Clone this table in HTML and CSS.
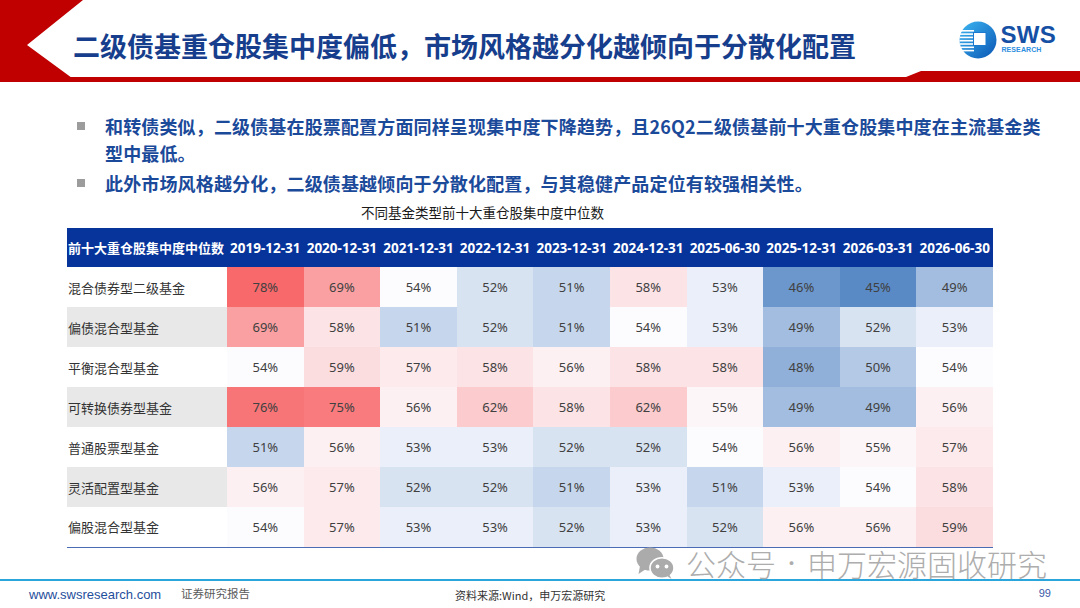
FILE: index.html
```html
<!DOCTYPE html>
<html lang="zh-CN">
<head>
<meta charset="utf-8">
<title>二级债基重仓股集中度偏低</title>
<link rel="stylesheet" href="styles.css">
</head>
<body>
<div class="page">
  <header class="header">
    <svg class="header-deco" viewBox="0 0 1080 82" width="1080" height="82">
      <polygon points="0,0 83,0 27,45 72,78 0,78" fill="#c00000"/>
      <rect x="0" y="77" width="910" height="5" fill="#c00000"/>
      <polygon points="906,77 921,71 1080,71 1080,82 906,82" fill="#c00000"/>
    </svg>
    <h1 class="title">二级债基重仓股集中度偏低，市场风格越分化越倾向于分散化配置</h1>
    <div class="logo">
      <svg class="logo-mark" viewBox="0 0 38 38" width="38" height="38">
        <defs>
          <linearGradient id="lg" x1="0" y1="0" x2="1" y2="1">
            <stop offset="0" stop-color="#3db6f2"/>
            <stop offset="1" stop-color="#0a56b4"/>
          </linearGradient>
        </defs>
        <circle cx="19" cy="19" r="18.5" fill="url(#lg)"/>
        <g fill="#ffffff">
          <rect x="2" y="9" width="13" height="1.6"/>
          <rect x="1" y="12.3" width="14" height="1.6"/>
          <rect x="0.6" y="15.6" width="14.4" height="1.6"/>
          <rect x="0.5" y="18.9" width="14.5" height="1.6"/>
          <rect x="0.8" y="22.2" width="14.2" height="1.6"/>
          <rect x="1.5" y="25.5" width="13.5" height="1.6"/>
          <rect x="3" y="28.8" width="12" height="1.6"/>
        </g>
        <rect x="14.5" y="11.5" width="12.5" height="13" fill="#ffffff" stroke="#1b79cf" stroke-width="1"/>
      </svg>
      <div class="logo-text">
        <span class="logo-sws">SWS</span>
        <span class="logo-research">RESEARCH</span>
      </div>
    </div>
  </header>

  <section class="bullets">
    <div class="bullet">
      <span class="bullet-mark"></span>
      <p class="bullet-text">和转债类似，二级债基在股票配置方面同样呈现集中度下降趋势，且26Q2二级债基前十大重仓股集中度在主流基金类型中最低。</p>
    </div>
    <div class="bullet">
      <span class="bullet-mark"></span>
      <p class="bullet-text">此外市场风格越分化，二级债基越倾向于分散化配置，与其稳健产品定位有较强相关性。</p>
    </div>
  </section>

  <div class="caption">不同基金类型前十大重仓股集中度中位数</div>

  <table class="heat">
    <colgroup>
      <col class="c-label">
      <col class="c-val"><col class="c-val"><col class="c-val"><col class="c-val"><col class="c-val">
      <col class="c-val"><col class="c-val"><col class="c-val"><col class="c-val"><col class="c-val">
    </colgroup>
    <thead>
      <tr>
        <th class="th-label">前十大重仓股集中度中位数</th>
        <th>2019-12-31</th><th>2020-12-31</th><th>2021-12-31</th><th>2022-12-31</th><th>2023-12-31</th>
        <th>2024-12-31</th><th>2025-06-30</th><th>2025-12-31</th><th>2026-03-31</th><th>2026-06-30</th>
      </tr>
    </thead>
    <tbody>
      <tr>
        <td class="label">混合债券型二级基金</td>
        <td style="background:#f8696b">78%</td><td style="background:#faa0a2">69%</td><td style="background:#fcfcff">54%</td><td style="background:#d8e3f2">52%</td><td style="background:#c6d6ec">51%</td>
        <td style="background:#fbe3e6">58%</td><td style="background:#eaeff9">53%</td><td style="background:#6c97cc">46%</td><td style="background:#5a8ac6">45%</td><td style="background:#a2bddf">49%</td>
      </tr>
      <tr class="alt">
        <td class="label">偏债混合型基金</td>
        <td style="background:#faa0a2">69%</td><td style="background:#fbe3e6">58%</td><td style="background:#c6d6ec">51%</td><td style="background:#d8e3f2">52%</td><td style="background:#c6d6ec">51%</td>
        <td style="background:#fcfcff">54%</td><td style="background:#eaeff9">53%</td><td style="background:#a2bddf">49%</td><td style="background:#d8e3f2">52%</td><td style="background:#eaeff9">53%</td>
      </tr>
      <tr>
        <td class="label">平衡混合型基金</td>
        <td style="background:#fcfcff">54%</td><td style="background:#fbdde0">59%</td><td style="background:#fceaec">57%</td><td style="background:#fbe3e6">58%</td><td style="background:#fcf0f3">56%</td>
        <td style="background:#fbe3e6">58%</td><td style="background:#fbe3e6">58%</td><td style="background:#90b0d9">48%</td><td style="background:#b4c9e6">50%</td><td style="background:#fcfcff">54%</td>
      </tr>
      <tr class="alt">
        <td class="label">可转换债券型基金</td>
        <td style="background:#f87577">76%</td><td style="background:#f97b7d">75%</td><td style="background:#fcf0f3">56%</td><td style="background:#fbcbce">62%</td><td style="background:#fbe3e6">58%</td>
        <td style="background:#fbcbce">62%</td><td style="background:#fcf6f9">55%</td><td style="background:#a2bddf">49%</td><td style="background:#a2bddf">49%</td><td style="background:#fcf0f3">56%</td>
      </tr>
      <tr>
        <td class="label">普通股票型基金</td>
        <td style="background:#c6d6ec">51%</td><td style="background:#fcf0f3">56%</td><td style="background:#eaeff9">53%</td><td style="background:#eaeff9">53%</td><td style="background:#d8e3f2">52%</td>
        <td style="background:#d8e3f2">52%</td><td style="background:#fcfcff">54%</td><td style="background:#fcf0f3">56%</td><td style="background:#fcf6f9">55%</td><td style="background:#fceaec">57%</td>
      </tr>
      <tr class="alt">
        <td class="label">灵活配置型基金</td>
        <td style="background:#fcf0f3">56%</td><td style="background:#fceaec">57%</td><td style="background:#d8e3f2">52%</td><td style="background:#d8e3f2">52%</td><td style="background:#c6d6ec">51%</td>
        <td style="background:#eaeff9">53%</td><td style="background:#c6d6ec">51%</td><td style="background:#eaeff9">53%</td><td style="background:#fcfcff">54%</td><td style="background:#fbe3e6">58%</td>
      </tr>
      <tr class="last">
        <td class="label">偏股混合型基金</td>
        <td style="background:#fcfcff">54%</td><td style="background:#fceaec">57%</td><td style="background:#eaeff9">53%</td><td style="background:#eaeff9">53%</td><td style="background:#d8e3f2">52%</td>
        <td style="background:#eaeff9">53%</td><td style="background:#d8e3f2">52%</td><td style="background:#fcf0f3">56%</td><td style="background:#fcf0f3">56%</td><td style="background:#fbdde0">59%</td>
      </tr>
    </tbody>
  </table>

  <footer class="footer">
    <span class="f-url">www.swsresearch.com</span>
    <span class="f-type">证券研究报告</span>
    <span class="f-source">资料来源:Wind，申万宏源研究</span>
    <span class="f-page">99</span>
  </footer>

  <div class="watermark">
    <svg class="wm-icon" viewBox="0 0 38 32" width="38" height="32">
      <ellipse cx="14" cy="12" rx="13.5" ry="11.5" fill="#ababab"/>
      <polygon points="4,19 2.5,27 10,22" fill="#ababab"/>
      <ellipse cx="26" cy="21" rx="12" ry="10.3" fill="#ababab" stroke="#ffffff" stroke-width="1.6"/>
      <polygon points="31,29 35.5,32 33,27" fill="#ababab"/>
      <circle cx="21.5" cy="19.5" r="1.9" fill="#ffffff"/>
      <circle cx="30.5" cy="19.5" r="1.9" fill="#ffffff"/>
    </svg>
    <span class="wm-text">公众号<span class="wm-dot">·</span>申万宏源固收研究</span>
  </div>
</div>
</body>
</html>
```

FILE: styles.css
```css
* { box-sizing: border-box; }

html, body {
  margin: 0;
  padding: 0;
}

body {
  width: 1080px;
  height: 608px;
  overflow: hidden;
  background: #ffffff;
  font-family: "Noto Sans", "Noto Sans CJK SC", sans-serif;
}

.page {
  position: relative;
  width: 1080px;
  height: 608px;
  display: flex;
  flex-direction: column;
}

/* ---------- header ---------- */
.header {
  position: relative;
  height: 82px;
  flex: none;
  display: flex;
  align-items: flex-start;
  justify-content: space-between;
}

.header-deco {
  position: absolute;
  left: 0;
  top: 0;
}

.title {
  position: relative;
  margin: 0;
  padding: 28px 0 0 73px;
  font-family: "Noto Sans CJK SC", sans-serif;
  font-size: 27px;
  line-height: 36px;
  font-weight: 700;
  color: #163e8c;
  white-space: nowrap;
}

.logo {
  position: relative;
  display: flex;
  align-items: center;
  gap: 3px;
  padding-top: 21px;
  margin-right: 24px;
}

.logo-mark {
  display: block;
}

.logo-text {
  display: flex;
  flex-direction: column;
  margin-top: -2px;
}

.logo-sws {
  font-family: "Liberation Sans", Arial, sans-serif;
  font-weight: 700;
  font-size: 24px;
  line-height: 22px;
  color: #1550a5;
  letter-spacing: 0.3px;
}

.logo-research {
  font-family: "Liberation Sans", Arial, sans-serif;
  font-weight: 700;
  font-size: 7px;
  line-height: 8px;
  color: #2b8ee0;
  margin-left: 1px;
  letter-spacing: 0.1px;
}

/* ---------- bullets ---------- */
.bullets {
  flex: none;
  margin-top: 31px;
  padding-left: 77px;
  display: flex;
  flex-direction: column;
  gap: 3px;
}

.bullet {
  display: flex;
  align-items: flex-start;
  gap: 20px;
}

.bullet-mark {
  flex: none;
  width: 8px;
  height: 8px;
  margin-top: 9px;
  background: #9c9c9c;
}

.bullet-text {
  margin: 0;
  width: 940px;
  font-family: "Noto Sans CJK SC", sans-serif;
  font-size: 18px;
  line-height: 27px;
  font-weight: 700;
  color: #1b4a9a;
  letter-spacing: 0.15px;
}

/* ---------- caption ---------- */
.caption {
  flex: none;
  margin-top: 6px;
  padding-left: 361px;
  font-family: "Noto Sans CJK SC", sans-serif;
  font-size: 13.5px;
  line-height: 18px;
  color: #1a1a1a;
}

/* ---------- table ---------- */
.heat {
  flex: none;
  margin: 7px 0 0 67px;
  width: 926px;
  table-layout: fixed;
  border-collapse: collapse;
  border-spacing: 0;
}

.c-label { width: 160px; }
.c-val { width: 76.6px; }

.heat thead tr {
  height: 39px;
  background: #06349b;
}

.heat th {
  padding: 0;
  color: #ffffff;
  font-family: "Noto Sans", "Noto Sans CJK SC", sans-serif;
  font-weight: 700;
  font-size: 13.5px;
  text-align: center;
  white-space: nowrap;
}

.heat th.th-label {
  text-align: left;
  padding-left: 1px;
  font-family: "Noto Sans CJK SC", sans-serif;
  font-size: 13px;
}

.heat tbody tr {
  height: 40px;
}

.heat td {
  padding: 0;
  text-align: center;
  font-family: "Noto Sans", "Noto Sans CJK SC", sans-serif;
  font-size: 13px;
  color: #404040;
}

.heat td.label {
  text-align: left;
  padding-left: 1px;
  font-family: "Noto Sans CJK SC", sans-serif;
  color: #333333;
  background: #ffffff;
}

.heat tr.alt td.label {
  background: #e8e8e8;
}

.heat tr.last td {
  border-bottom: 1.5px solid #4a6cb5;
}

/* ---------- footer ---------- */
.footer {
  margin-top: auto;
  flex: none;
  height: 29px;
  border-top: 2px solid #2ba6dc;
  display: flex;
  align-items: center;
}

.f-url {
  flex: none;
  width: 181px;
  padding-left: 29px;
  font-family: "Liberation Sans", Arial, sans-serif;
  font-size: 13px;
  color: #1f4e9c;
  white-space: nowrap;
}

.f-type {
  flex: none;
  width: 274px;
  font-family: "Noto Sans CJK SC", sans-serif;
  font-size: 11.5px;
  color: #595959;
  margin-top: -3px;
}

.f-source {
  flex: 1;
  font-family: "Noto Sans CJK SC", sans-serif;
  font-size: 11px;
  color: #333333;
}

.f-page {
  padding-right: 29px;
  font-family: "Liberation Sans", Arial, sans-serif;
  font-size: 11px;
  color: #3a5aa8;
  margin-top: -3px;
}

/* ---------- watermark ---------- */
.watermark {
  position: absolute;
  left: 636px;
  top: 546px;
  display: flex;
  align-items: center;
  gap: 12px;
}

.wm-icon {
  display: block;
}

.wm-text {
  font-family: "Noto Sans CJK SC", sans-serif;
  font-size: 30px;
  line-height: 34px;
  font-weight: 300;
  color: #adadad;
  white-space: nowrap;
}

.wm-dot {
  display: inline-block;
  width: 31px;
  text-align: center;
  font-size: 20px;
  vertical-align: top;
}
```
